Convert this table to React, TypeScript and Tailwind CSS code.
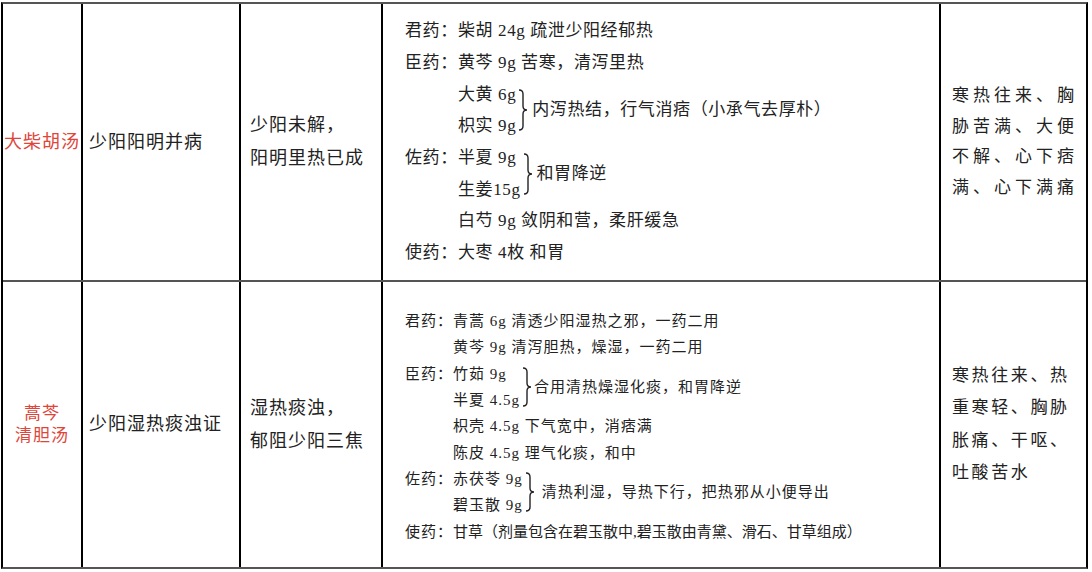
import React from 'react';

const FONT = "font-['Liberation_Serif','Noto_Sans_CJK_SC',serif]";

// 大括号
const Brace: React.FC<{ h: number }> = ({ h }) => {
  const m = h / 2;
  return (
    <svg width="10" height={h} viewBox={`0 0 10 ${h}`} className="shrink-0">
      <path
        d={`M1 1 Q5 1 5 5 L5 ${m - 4} Q5 ${m} 9 ${m} Q5 ${m} 5 ${m + 4} L5 ${h - 5} Q5 ${h - 1} 1 ${h - 1}`}
        fill="none"
        stroke="#222"
        strokeWidth={1.4}
      />
    </svg>
  );
};

const Line: React.FC<{ label?: string; w: string; children: React.ReactNode; className?: string }> = ({ label, w, children, className }) => (
  <div className="flex whitespace-nowrap">
    <span className={`${w} shrink-0`}>{label}</span>
    <span className={className}>{children}</span>
  </div>
);

interface GroupProps {
  label?: string;
  w: string;
  items: string[];
  text: string;
  braceH: number;
  textGap: string;
}

const Group: React.FC<GroupProps> = ({ label, w, items, text, braceH, textGap }) => (
  <div className="flex items-center whitespace-nowrap">
    <span className={`${w} shrink-0 self-start`}>{label}</span>
    <div className="flex flex-col">
      {items.map((it) => (
        <span key={it}>{it}</span>
      ))}
    </div>
    <span className="ml-[2px] flex">
      <Brace h={braceH} />
    </span>
    <span className={textGap}>{text}</span>
  </div>
);

export default function App() {
  return (
    <div className={`w-[1092px] h-[572px] bg-white text-[#222] ${FONT}`}>
      <div className="ml-[1px] mt-[2px] w-[1087px] border-2 border-x-black border-y-[#555]">
        {/* 大柴胡汤 */}
        <div className="flex h-[278px] border-b-2 border-[#555]">
          <div className="w-[78px] flex items-center justify-center text-[18px] tracking-[1px] text-[#e0453a] whitespace-nowrap">
            大柴胡汤
          </div>
          <div className="w-[158px] border-l-2 border-black flex items-center pl-[6px] text-[18px] tracking-[1px]">
            少阳阳明并病
          </div>
          <div className="w-[142px] border-l-2 border-black flex items-center pl-[9px] text-[18px] tracking-[1px] leading-[33px]">
            <div>
              少阳未解，
              <br />
              阳明里热已成
            </div>
          </div>
          <div className="w-[558px] border-l-2 border-black flex items-center pl-[22px] text-[17px] tracking-[0.6px] leading-[31.7px]">
            <div>
              <Line label="君药：" w="w-[53px]">柴胡 24g 疏泄少阳经郁热</Line>
              <Line label="臣药：" w="w-[53px]">黄芩 9g 苦寒，清泻里热</Line>
              <Group w="w-[53px]" items={['大黄 6g', '枳实 9g']} text="内泻热结，行气消痞（小承气去厚朴）" braceH={42} textGap="ml-[4px]" />
              <Group label="佐药：" w="w-[53px]" items={['半夏 9g', '生姜15g']} text="和胃降逆" braceH={42} textGap="ml-[4px]" />
              <Line w="w-[53px]">白芍 9g 敛阴和营，柔肝缓急</Line>
              <Line label="使药：" w="w-[53px]">大枣 4枚 和胃</Line>
            </div>
          </div>
          <div className="w-[147px] border-l-2 border-black flex items-center pl-[11px] text-[17px] tracking-[4px] leading-[30.5px] whitespace-nowrap">
            <div>
              寒热往来、胸
              <br />
              胁苦满、大便
              <br />
              不解、心下痞
              <br />
              满、心下满痛
            </div>
          </div>
        </div>

        {/* 蒿芩清胆汤 */}
        <div className="flex h-[285px]">
          <div className="w-[78px] flex items-center justify-center text-center text-[17px] tracking-[1px] leading-[22px] text-[#e0453a]">
            <div>
              蒿芩
              <br />
              清胆汤
            </div>
          </div>
          <div className="w-[158px] border-l-2 border-black flex items-center pl-[6px] text-[18px] tracking-[1px]">
            少阳湿热痰浊证
          </div>
          <div className="w-[142px] border-l-2 border-black flex items-center pl-[9px] text-[18px] tracking-[1px] leading-[33px]">
            <div>
              湿热痰浊，
              <br />
              郁阻少阳三焦
            </div>
          </div>
          <div className="w-[558px] border-l-2 border-black flex items-center pl-[22px] pt-[4px] text-[15px] tracking-[1px] leading-[26.3px]">
            <div>
              <Line label="君药：" w="w-[48px]">青蒿 6g 清透少阳湿热之邪，一药二用</Line>
              <Line w="w-[48px]">黄芩 9g 清泻胆热，燥湿，一药二用</Line>
              <Group label="臣药：" w="w-[48px]" items={['竹茹 9g', '半夏 4.5g']} text="合用清热燥湿化痰，和胃降逆" braceH={40} textGap="ml-[2px]" />
              <Line w="w-[48px]">枳壳 4.5g 下气宽中，消痞满</Line>
              <Line w="w-[48px]">陈皮 4.5g 理气化痰，和中</Line>
              <Group label="佐药：" w="w-[48px]" items={['赤茯苓 9g', '碧玉散 9g']} text="清热利湿，导热下行，把热邪从小便导出" braceH={40} textGap="ml-[7px]" />
              <Line label="使药：" w="w-[48px]" className="tracking-[0px]">
                甘草（剂量包含在碧玉散中,碧玉散由青黛、滑石、甘草组成）
              </Line>
            </div>
          </div>
          <div className="w-[147px] border-l-2 border-black flex items-center pl-[11px] text-[17px] tracking-[2.6px] leading-[32.5px] whitespace-nowrap">
            <div>
              寒热往来、热
              <br />
              重寒轻、胸胁
              <br />
              胀痛、干呕、
              <br />
              吐酸苦水
            </div>
          </div>
        </div>
      </div>
    </div>
  );
}
